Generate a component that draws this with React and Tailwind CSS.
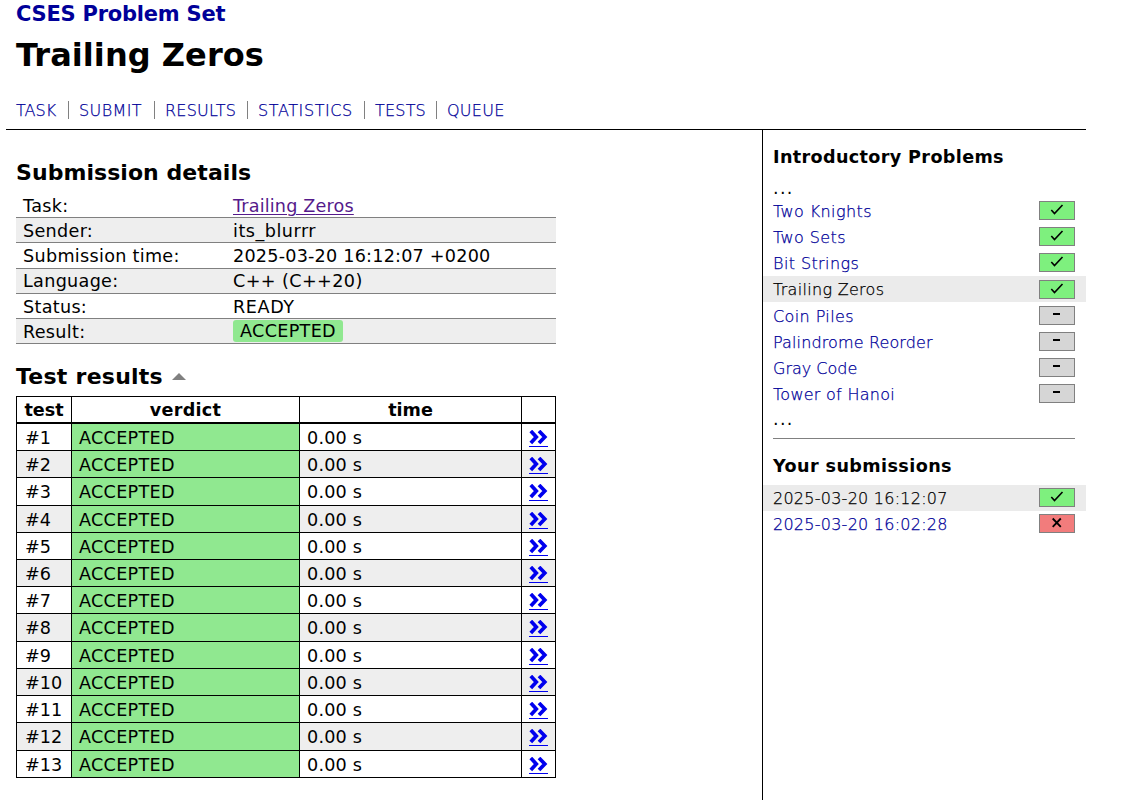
import React from 'react';

const navItems = [
    { label: 'TASK', width: 'w-[52px]', spacing: 'tracking-[0px]' },
    { label: 'SUBMIT', width: 'w-[86px]', spacing: 'tracking-[0.4px]' },
    { label: 'RESULTS', width: 'w-[93px]', spacing: 'tracking-[0.2px]' },
    { label: 'STATISTICS', width: 'w-[117px]', spacing: 'tracking-[0.6px]' },
    { label: 'TESTS', width: 'w-[72px]', spacing: 'tracking-[0.2px]' },
    { label: 'QUEUE', width: 'w-[80px]', spacing: 'tracking-[0.25px]' }
];

const details = [
    { label: 'Task:', value: <a href="#" className="text-[#551a8b] underline decoration-1 underline-offset-2 tracking-[0.17px]">Trailing Zeros</a> },
    { label: 'Sender:', value: <span className="tracking-[0.5px]">its_blurrr</span> },
    { label: 'Submission time:', value: '2025-03-20 16:12:07 +0200' },
    { label: 'Language:', value: <span className="tracking-[0.4px]">C++ (C++20)</span> },
    { label: 'Status:', value: <span className="tracking-[0.6px]">READY</span> },
    { label: 'Result:', value: <span className="-mt-[2px] flex h-[22px] w-[110px] items-center justify-center rounded-[3px] bg-[#90e890] pt-px tracking-[0.3px]">ACCEPTED</span> }
];

const tests = Array.from({ length: 13 }, (_, i) => i + 1);

const problems = [
    { name: 'Two Knights', score: 'full', spacing: 'tracking-[0.4px]' },
    { name: 'Two Sets', score: 'full', spacing: 'tracking-[0.4px]' },
    { name: 'Bit Strings', score: 'full', spacing: 'tracking-[0.4px]' },
    { name: 'Trailing Zeros', score: 'full', spacing: 'tracking-[0.3px]', current: true },
    { name: 'Coin Piles', score: 'none', spacing: 'tracking-[0.4px]' },
    { name: 'Palindrome Reorder', score: 'none', spacing: 'tracking-[0.13px]' },
    { name: 'Gray Code', score: 'none', spacing: 'tracking-[0px]' },
    { name: 'Tower of Hanoi', score: 'none', spacing: 'tracking-[0.27px]' }
];

const submissions = [
    { name: '2025-03-20 16:12:07', score: 'full', spacing: 'tracking-[0.25px]', current: true },
    { name: '2025-03-20 16:02:28', score: 'zero', spacing: 'tracking-[0.25px]' }
];

const scoreColors = {
    full: 'bg-[#7ef07e]',
    zero: 'bg-[#f27c7c]',
    none: 'bg-[#d6d6d6]'
};

const ScoreIcon = ({ score }) => (
    <span className={`-mt-[0.8px] flex h-[19px] w-9 shrink-0 justify-center border border-[#808080] ${scoreColors[score]}`}>
        <svg className="h-[17px] w-[34px]" viewBox="0 0 34 17" fill="none" stroke="black">
            {score === 'full' && <path d="M11.3 8L14.5 11.6L22.5 3" strokeWidth="1.6" />}
            {score === 'zero' && <path d="M12.7 3.5L20.8 11.8M20.8 3.5L12.7 11.8" strokeWidth="1.8" />}
            {score === 'none' && <path d="M13 7H20" strokeWidth="2" />}
        </svg>
    </span>
);

const SideRow = ({ item }) => (
    <a href="#" className={`flex h-[26.15px] items-start justify-between pl-2.5 pr-[11px] pt-[4.5px] font-extralight ${item.current ? 'bg-[#ebebeb] text-black' : 'text-[#000099]'}`}>
        <span className={`text-base leading-[20px] [-webkit-text-stroke:0.25px] ${item.spacing}`}>{item.name}</span>
        <ScoreIcon score={item.score} />
    </a>
);

const App = () => {
    return (
        <div className="h-[800px] w-[1138px] overflow-hidden bg-white pl-1.5 font-['DejaVu_Sans',sans-serif] text-black">
            <header className="flex h-[130px] w-[1080px] flex-col border-b border-black pl-2.5">
                <a href="#" className="h-[27px] text-[21px] font-bold leading-[29px] tracking-[-0.23px] text-[#000099]">CSES Problem Set</a>
                <h1 className="h-[56px] text-[32px] font-bold leading-[57px] tracking-[0.05px]">Trailing Zeros</h1>
                <nav className="flex pt-[18px] font-extralight text-[#000099] [-webkit-text-stroke:0.25px]">
                    {navItems.map((item, i) => (
                        <div key={item.label} className={`h-[18px] whitespace-nowrap leading-[19px] ${item.width} ${i > 0 ? 'border-l border-[#808080] pl-[10px]' : ''}`}>
                            <a href="#" className={item.spacing}>{item.label}</a>
                        </div>
                    ))}
                </nav>
            </header>

            <div className="flex h-[670px] w-[1080px]">
                <main className="w-[756px] pl-2.5">
                    <h2 className="h-[57px] pt-[28px] text-[22px] font-bold leading-[30px] tracking-[0.06px]">Submission details</h2>
                    <div className="mt-[6px] w-[540px] text-[17.6px] tracking-[0.22px]">
                        {details.map((row, i) => (
                            <div key={row.label} className={`flex h-[25.2px] items-center border-b border-[#808080] pl-[7px] pt-[2px] ${i % 2 ? 'bg-[#eeeeee]' : ''}`}>
                                <span className="w-[210px] tracking-[0.3px]">{row.label}</span>
                                <span>{row.value}</span>
                            </div>
                        ))}
                    </div>

                    <h2 className="flex h-[47px] items-center pt-[19px] text-[22px] font-bold leading-[30px] tracking-[0.25px]">
                        Test results
                        <svg className="-mt-px ml-[9px] h-[7px] w-[14px]" viewBox="0 0 14 7" fill="#808080">
                            <path d="M0 7L7 0L14 7Z" />
                        </svg>
                    </h2>
                    <div className="mt-[4.8px] w-[540px] border-l border-t border-black text-[17.6px]">
                        <div className="flex h-[27px] border-b-2 border-black text-center font-bold leading-[27px]">
                            <div className="w-[55px] border-r border-black">test</div>
                            <div className="w-[228px] border-r border-black tracking-[0.25px]">verdict</div>
                            <div className="w-[222px] border-r border-black">time</div>
                            <div className="w-[34px] border-r border-black"></div>
                        </div>
                        {tests.map((n) => (
                            <div key={n} className={`flex h-[27.22px] border-b border-black leading-[28px] ${n % 2 ? 'bg-white' : 'bg-[#eeeeee]'}`}>
                                <div className="w-[55px] border-r border-black pl-2">#{n}</div>
                                <div className="w-[228px] border-r border-black bg-[#90e890] pl-[7px] tracking-[0.3px]">ACCEPTED</div>
                                <div className="w-[222px] border-r border-black pl-[7px] tracking-[0.2px]">0.00 s</div>
                                <a href="#" className="flex w-[34px] items-start justify-center border-r border-black pt-[6px]">
                                    <svg className="h-[17px] w-[19px]" viewBox="0 0 19 17" fill="none" stroke="#0000ee">
                                        <path d="M1.8 1L7.3 7L1.8 13M10 1L15.8 7L10 13" strokeWidth="3.7" />
                                        <path d="M0 16.5H19" />
                                    </svg>
                                </a>
                            </div>
                        ))}
                    </div>
                </main>

                <aside className="w-[324px] border-l border-black">
                    <h4 className="h-[38px] pl-2.5 pt-[15px] text-[17.6px] font-bold leading-[24px] tracking-[0.35px]">Introductory Problems</h4>
                    <div className="mt-[9px] h-[20.5px] pl-2.5 text-[17.6px] leading-[22px] tracking-[1.3px]">...</div>
                    {problems.map((p) => <SideRow key={p.name} item={p} />)}
                    <div className="h-[31px] pl-2.5 text-[17.6px] leading-[25px] tracking-[1.3px]">...</div>
                    <div className="ml-2.5 w-[302px] border-b border-[#808080]"></div>
                    <h4 className="pl-2.5 pt-[15px] text-[17.6px] font-bold leading-[24px] tracking-[0.4px]">Your submissions</h4>
                    <div className="pt-[7px]">
                        {submissions.map((s) => <SideRow key={s.name} item={s} />)}
                    </div>
                </aside>
            </div>
        </div>
    );
};

export default App;
